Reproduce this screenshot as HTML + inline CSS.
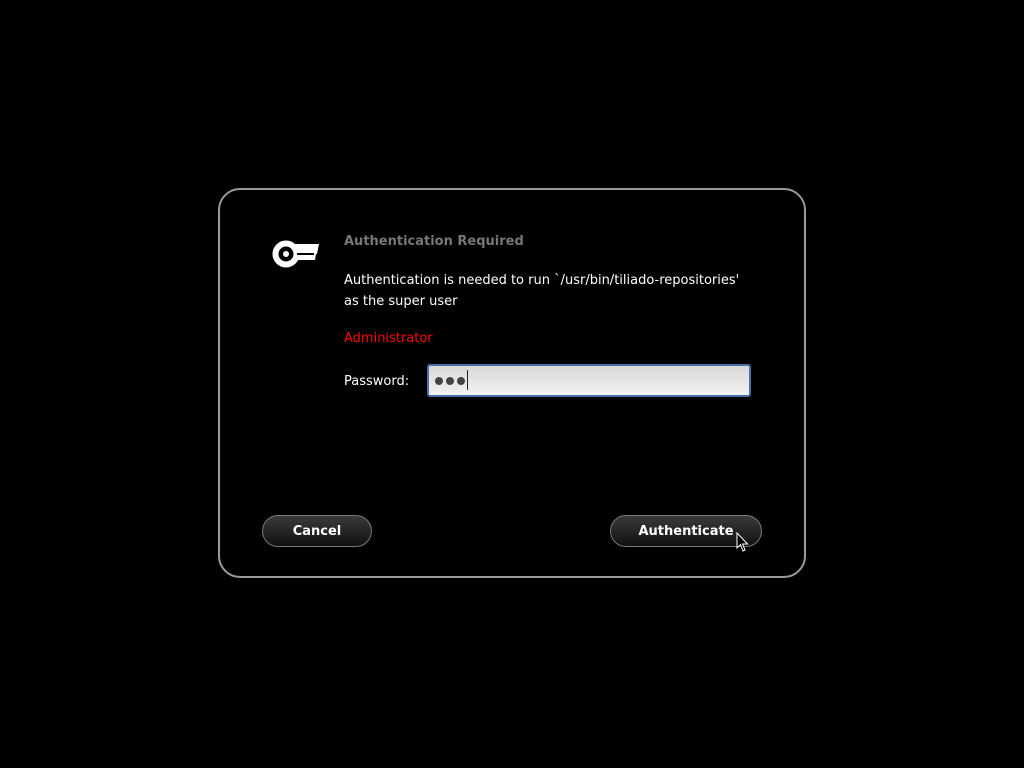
<!DOCTYPE html>
<html><head><style>
html,body{margin:0;padding:0;background:#000;width:1024px;height:768px;overflow:hidden;font-family:"DejaVu Sans","Liberation Sans",sans-serif;}
.dlg{position:absolute;left:218px;top:188px;width:584px;height:386px;border:2px solid #9a9a9a;border-radius:22px;}
.t{position:absolute;white-space:nowrap;font-size:13px;color:#fff;}
.btn{position:absolute;height:30px;border:1px solid #777;border-radius:16px;background:linear-gradient(#3a3a3a,#111);color:#fff;font-weight:bold;font-size:13px;text-align:center;line-height:32px;}
.inp{position:absolute;left:427px;top:364px;width:320px;height:29px;border:2px solid #4a70a8;border-radius:3px;background:linear-gradient(#d8d8d8,#f2f2f2);}
.dot{position:absolute;top:11px;width:8px;height:8px;border-radius:50%;background:#444;}
</style></head><body>
<div class="dlg"></div>
<svg style="position:absolute;left:270px;top:238px" width="52" height="34" viewBox="0 0 52 34">
<circle cx="16" cy="16" r="10.5" fill="none" stroke="#fff" stroke-width="6"/>
<circle cx="16" cy="16" r="3" fill="#fff"/>
<path d="M24 6 H49 L47 16 H26 Z" fill="#fff"/>
<path d="M26 16 H46 L45 22 H26 Z" fill="#fff"/>
<rect x="27" y="15" width="17" height="2" fill="#000"/>
</svg>
<div class="t" style="left:344px;top:234px;color:#777;font-weight:bold;font-size:13px">Authentication Required</div>
<div class="t" style="left:344px;top:273px">Authentication is needed to run `/usr/bin/tiliado-repositories'</div>
<div class="t" style="left:344px;top:294px">as the super user</div>
<div class="t" style="left:344px;top:331px;color:#f00">Administrator</div>
<div class="t" style="left:344px;top:374px">Password:</div>
<div class="inp"><span class="dot" style="left:6px"></span><span class="dot" style="left:17px"></span><span class="dot" style="left:28px"></span><span style="position:absolute;left:38px;top:4px;width:1px;height:20px;background:#222"></span></div>
<div class="btn" style="left:262px;top:515px;width:108px">Cancel</div>
<div class="btn" style="left:610px;top:515px;width:150px">Authenticate</div>
<svg style="position:absolute;left:736px;top:532px" width="14" height="22" viewBox="0 0 14 22"><path d="M1 1 L1 16 L4.5 12.5 L7 19 L9 18 L6.5 12 L11.5 12 Z" fill="#000" stroke="#fff" stroke-width="1"/></svg>
</body></html>
